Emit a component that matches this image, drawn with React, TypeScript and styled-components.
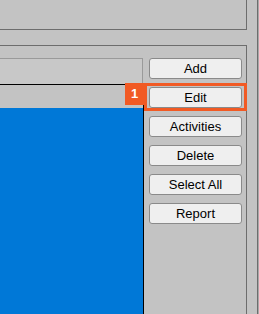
import React from "react";
import styled, { createGlobalStyle } from "styled-components";

const Global = createGlobalStyle`
  html, body { margin: 0; padding: 0; }
  body { background: #c3c3c3; font-family: "Liberation Sans", Arial, sans-serif; }
`;

const Window = styled.div`
  width: 259px;
  height: 314px;
  display: flex;
  background: #c3c3c3;
  overflow: hidden;
`;

const Main = styled.div`
  width: 257px;
  display: flex;
  flex-direction: column;
`;

const Edge = styled.div`
  width: 1px;
  background: #6d6d6d;
  border-right: 1px solid #a8a8a8;
`;

const TopPanel = styled.div`
  width: 246px;
  height: 29px;
  border-right: 1px solid #6d6d6d;
  border-bottom: 1px solid #6d6d6d;
`;

const Group = styled.div`
  margin-top: 15px;
  width: 246px;
  flex: 1;
  border-top: 1px solid #6d6d6d;
  border-right: 1px solid #6d6d6d;
  padding-top: 12px;
  display: flex;
  min-height: 0;
`;

const List = styled.div`
  width: 144px;
  display: flex;
  flex-direction: column;
`;

const ListHeader = styled.div`
  width: 142px;
  height: 25px;
  background: #c8c8c8;
  border-top: 1px solid #9a9a9a;
  border-right: 1px solid #9a9a9a;
`;

const ListBody = styled.div`
  flex: 1;
  width: 143px;
  border-top: 1px solid #000;
  border-right: 1px solid #000;
  display: flex;
  flex-direction: column;
`;

const Row = styled.div<{ $selected?: boolean }>`
  height: ${(p) => (p.$selected ? "auto" : "23px")};
  flex: ${(p) => (p.$selected ? 1 : "none")};
  background: ${(p) => (p.$selected ? "#0078d7" : "#c3c3c3")};
`;

const Buttons = styled.div`
  margin-left: 5px;
  display: flex;
  flex-direction: column;
  gap: 8px;
`;

const Button = styled.button`
  width: 93px;
  height: 21px;
  box-sizing: border-box;
  border: 1px solid #8a8a8a;
  border-radius: 3px;
  background: #efefef;
  font-family: "Liberation Sans", Arial, sans-serif;
  font-size: 13px;
  color: #000;
  padding: 0;
  line-height: 19px;
  text-align: center;
`;

const Highlighted = styled.div`
  position: relative;
  display: flex;
`;

const Ring = styled.div`
  position: absolute;
  left: -5px;
  right: -5px;
  top: -4px;
  bottom: -3px;
  border: 3px solid #f15a24;
  pointer-events: none;
`;

const Badge = styled.div`
  position: absolute;
  right: calc(100% + 3px);
  top: -3px;
  width: 19px;
  height: 22px;
  background: #f15a24;
  color: #fff;
  font-family: "Liberation Sans", Arial, sans-serif;
  font-weight: bold;
  font-size: 13px;
  line-height: 22px;
  text-align: center;
`;

export default function App() {
  return (
    <>
      <Global />
      <Window>
        <Main>
          <TopPanel />
          <Group>
            <List>
              <ListHeader />
              <ListBody>
                <Row />
                <Row $selected />
              </ListBody>
            </List>
            <Buttons>
              <Button>Add</Button>
              <Highlighted>
                <Button>Edit</Button>
                <Ring>
                  <Badge>1</Badge>
                </Ring>
              </Highlighted>
              <Button>Activities</Button>
              <Button>Delete</Button>
              <Button>Select All</Button>
              <Button>Report</Button>
            </Buttons>
          </Group>
        </Main>
        <Edge />
      </Window>
    </>
  );
}
